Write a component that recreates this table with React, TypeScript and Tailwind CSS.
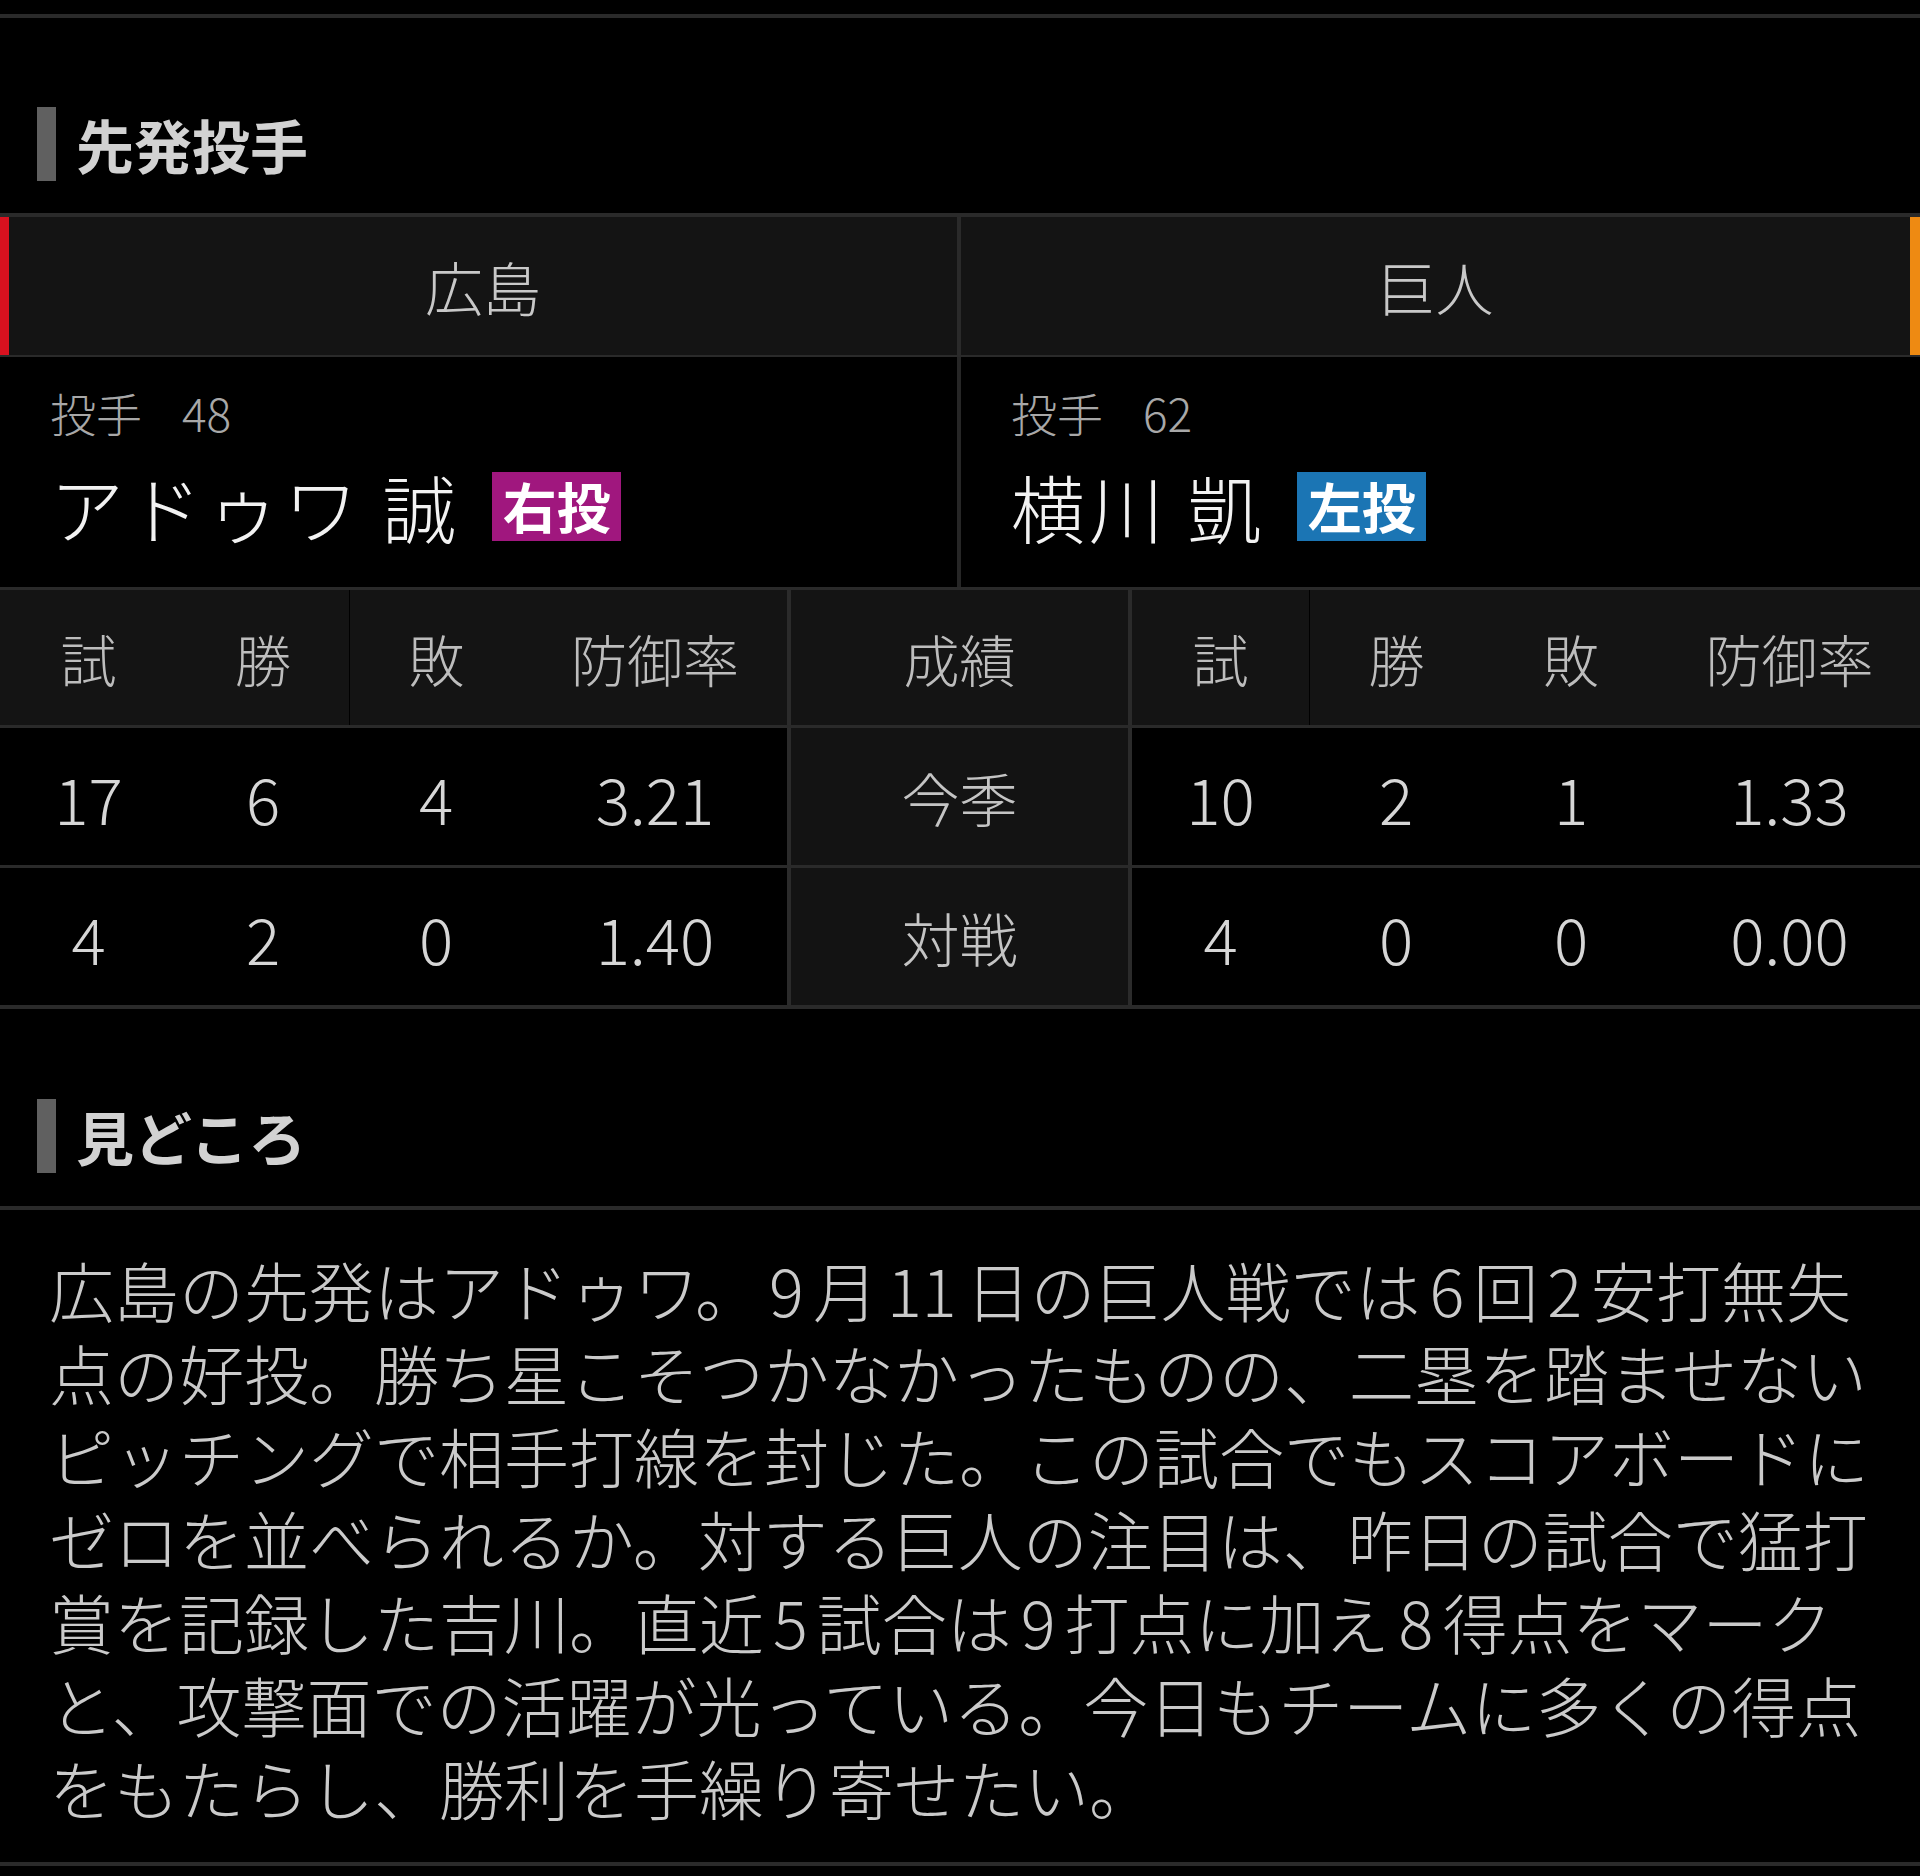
import React from "react";

const FONT = { fontFamily: '"Noto Sans CJK JP", "Noto Sans", sans-serif' };

const lines = [
  "広島の先発はアドゥワ。9月11日の巨人戦では6回2安打無失",
  "点の好投。勝ち星こそつかなかったものの、二塁を踏ませない",
  "ピッチングで相手打線を封じた。この試合でもスコアボードに",
  "ゼロを並べられるか。対する巨人の注目は、昨日の試合で猛打",
  "賞を記録した吉川。直近5試合は9打点に加え8得点をマーク",
  "と、攻撃面での活躍が光っている。今日もチームに多くの得点",
  "をもたらし、勝利を手繰り寄せたい。",
];

function renderLine(t: string) {
  const parts = t.split(/(\d+)/);
  return parts.map((p, i) =>
    /^\d+$/.test(p) ? (
      <span key={i} className="px-[9px]">
        {p}
      </span>
    ) : (
      <React.Fragment key={i}>{p}</React.Fragment>
    )
  );
}

function SectionTitle({ title }: { title: string }) {
  return (
    <div className="flex h-[74px] items-center pl-[37px]">
      <div className="h-[74px] w-[19px] bg-[#606060]" />
      <div className="ml-[20px] text-[58px] font-bold leading-none text-[#d2d2d2]">{title}</div>
    </div>
  );
}

function Player({ num, name, hand, color }: { num: string; name: string; hand: string; color: string }) {
  return (
    <div className="pl-[50px] pt-[30px]">
      <div className="flex h-[50px] items-center text-[46px] font-light leading-none text-[#a8a8a8]">
        <span>投手</span>
        <span className="ml-[40px]">{num}</span>
      </div>
      <div className="mt-[29px] flex h-[80px] items-center">
        <span className="text-[74px] font-light leading-none tracking-[4px] text-[#f2f2f2]">{name}</span>
        <span
          className={`ml-[32px] flex h-[69px] w-[129px] items-center justify-center text-[54px] font-bold leading-none text-white ${color}`}
        >
          {hand}
        </span>
      </div>
    </div>
  );
}

const cols = "grid grid-cols-[177px_172px_174px_264px_4px_337px_4px_177px_174px_176px_261px]";

function Cell({ children, bg, extra = "" }: { children?: React.ReactNode; bg: string; extra?: string }) {
  return <div className={`flex items-center justify-center ${bg} ${extra}`}>{children}</div>;
}

function HLine() {
  return <div className="h-[3px] bg-[#2a2a2a]" />;
}

function DataRow({ label, l, r }: { label: string; l: string[]; r: string[] }) {
  return (
    <div className={`${cols} h-[137px] text-[64px] font-light leading-none text-[#d6d6d6]`}>
      {l.map((v, i) => (
        <Cell key={"l" + i} bg="bg-black">{v}</Cell>
      ))}
      <div className="bg-[#2b2b2b]" />
      <Cell bg="bg-[#131313]">
        <span className="text-[58px] text-[#c4c4c4]">{label}</span>
      </Cell>
      <div className="bg-[#2b2b2b]" />
      {r.map((v, i) => (
        <Cell key={"r" + i} bg="bg-black">{v}</Cell>
      ))}
    </div>
  );
}

export default function App() {
  return (
    <div className="h-[1876px] w-[1920px] overflow-hidden bg-black" style={FONT}>
      <div className="h-[14px]" />
      <div className="h-[4px] bg-[#2a2a2a]" />
      <div className="h-[195px] pt-[89px]">
        <SectionTitle title="先発投手" />
      </div>

      {/* team tabs */}
      <div className="h-[4px] bg-[#2a2a2a]" />
      <div className="flex h-[138px] bg-[#141414] text-[58px] font-light leading-none text-[#c8c8c8]">
        <div className="w-[9px] bg-[#d8111f]" />
        <div className="flex w-[948px] items-center justify-center">広島</div>
        <div className="w-[4px] bg-[#2a2a2a]" />
        <div className="flex flex-1 items-center justify-center">巨人</div>
        <div className="w-[10px] bg-[#ee8a12]" />
      </div>
      <div className="h-[2px] bg-[#2a2a2a]" />

      {/* players */}
      <div className="flex h-[230px]">
        <div className="w-[957px]">
          <Player num="48" name="アドゥワ 誠" hand="右投" color="bg-[#a0177e]" />
        </div>
        <div className="w-[4px] bg-[#262626]" />
        <div className="flex-1">
          <Player num="62" name="横川 凱" hand="左投" color="bg-[#1b75b4]" />
        </div>
      </div>

      {/* stats table */}
      <HLine />
      <div className={`${cols} h-[135px] text-[56px] font-light leading-none text-[#bdbdbd]`}>
        <Cell bg="bg-[#141414]">試</Cell>
        <Cell bg="bg-[#141414]">勝</Cell>
        <Cell bg="bg-[#141414]" extra="border-l border-black">敗</Cell>
        <Cell bg="bg-[#141414]">防御率</Cell>
        <div className="bg-[#2b2b2b]" />
        <Cell bg="bg-[#141414]">成績</Cell>
        <div className="bg-[#2b2b2b]" />
        <Cell bg="bg-[#141414]">試</Cell>
        <Cell bg="bg-[#141414]" extra="border-l border-black">勝</Cell>
        <Cell bg="bg-[#141414]">敗</Cell>
        <Cell bg="bg-[#141414]">防御率</Cell>
      </div>
      <HLine />
      <DataRow label="今季" l={["17", "6", "4", "3.21"]} r={["10", "2", "1", "1.33"]} />
      <HLine />
      <DataRow label="対戦" l={["4", "2", "0", "1.40"]} r={["4", "0", "0", "0.00"]} />
      <div className="h-[4px] bg-[#2a2a2a]" />

      {/* highlights */}
      <div className="h-[197px] pt-[90px]">
        <SectionTitle title="見どころ" />
      </div>
      <div className="h-[4px] bg-[#2a2a2a]" />
      <div className="pl-[49px] pt-[38px] pb-[33px] text-[65px] font-light leading-[83px] text-[#cacaca]">
        {lines.map((t, i) => (
          <div key={i} className="whitespace-nowrap">
            {renderLine(t)}
          </div>
        ))}
      </div>
      <div className="h-[4px] bg-[#2a2a2a]" />
    </div>
  );
}
